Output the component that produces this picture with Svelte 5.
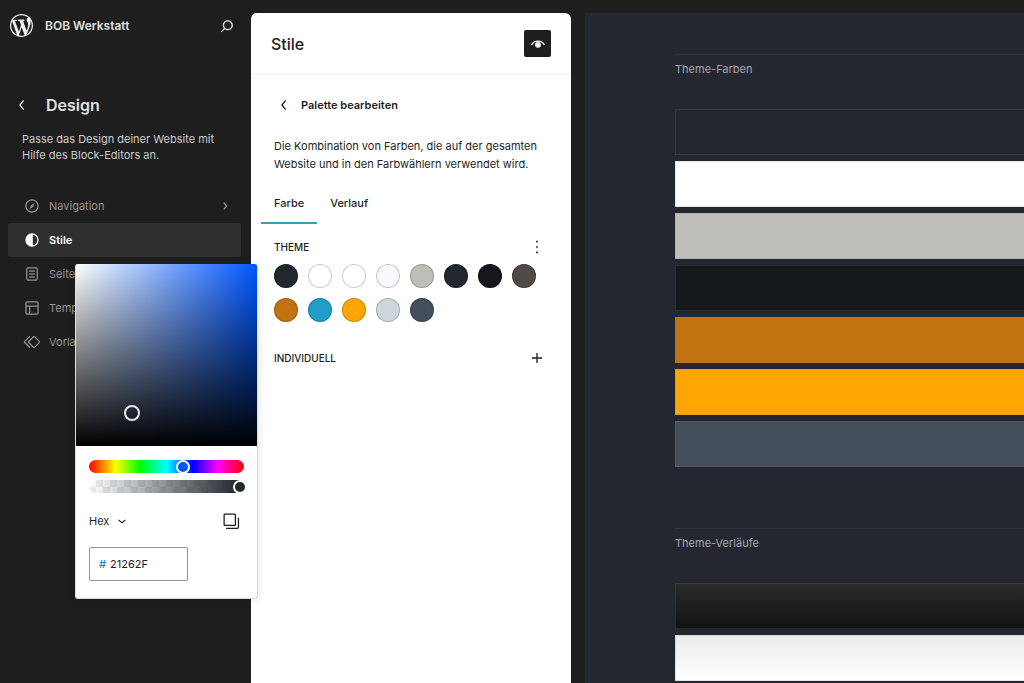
<script lang="ts">
    type NavItem = { id: string; label: string; icon: string; more?: boolean };

    const navItems: NavItem[] = [
        {
            id: "navigation",
            label: "Navigation",
            icon: "M12 4c-4.4 0-8 3.6-8 8s3.6 8 8 8 8-3.6 8-8-3.6-8-8-8zm0 14.5c-3.6 0-6.5-2.9-6.5-6.5S8.4 5.5 12 5.5s6.5 2.9 6.5 6.5-2.9 6.5-6.5 6.5zM9 16l4.5-3L15 8.4l-4.5 3L9 16z",
            more: true,
        },
        {
            id: "styles",
            label: "Stile",
            icon: "M12 4a8 8 0 1 0 0 16 8 8 0 0 0 0-16zm1 1.6a6.5 6.5 0 0 1 0 12.8z",
        },
        {
            id: "pages",
            label: "Seiten",
            icon: "M7 4h10a2 2 0 0 1 2 2v12a2 2 0 0 1-2 2H7a2 2 0 0 1-2-2V6a2 2 0 0 1 2-2zm0 1.5a.5.5 0 0 0-.5.5v12c0 .3.2.5.5.5h10a.5.5 0 0 0 .5-.5V6a.5.5 0 0 0-.5-.5zM8.5 7.7h7v1.5h-7zM8.5 11.2h7v1.5h-7zM8.5 14.7h7v1.5h-7z",
        },
        {
            id: "templates",
            label: "Templates",
            icon: "M18 5.5H6a.5.5 0 0 0-.5.5v3h13V6a.5.5 0 0 0-.5-.5zm.5 5H10v8h8a.5.5 0 0 0 .5-.5v-7.5zm-10 0h-3V18a.5.5 0 0 0 .5.5h2.5v-8zM6 4h12a2 2 0 0 1 2 2v12a2 2 0 0 1-2 2H6a2 2 0 0 1-2-2V6a2 2 0 0 1 2-2z",
        },
        {
            id: "patterns",
            label: "Vorlagen",
            icon: "M21.3 10.8l-5.6-5.6c-.7-.7-1.8-.7-2.5 0l-5.6 5.6c-.7.7-.7 1.8 0 2.5l5.6 5.6c.3.3.8.5 1.2.5s.9-.2 1.2-.5l5.6-5.6c.8-.7.8-1.9.1-2.5zm-1 1.4l-5.6 5.6c-.1.1-.3.1-.4 0l-5.6-5.6c-.1-.1-.1-.3 0-.4l5.6-5.6s.1-.1.2-.1.1 0 .2.1l5.6 5.6c.1.1.1.3 0 .4zm-16.6-.4L10 5.5l-1-1-6.3 6.3c-.7.7-.7 1.8 0 2.5L9 19.5l1.1-1.1-6.3-6.3c-.2 0-.2-.2-.1-.3z",
        },
    ];

    const themeColors = [
        "#21262f", "#ffffff", "#ffffff", "#f7f9fc", "#bfbdb7", "#21262f", "#15171c",
        "#504947", "#c27210", "#219ec8", "#ffa602", "#ced6db", "#454f5b",
    ];

    const previewColors = ["#242630", "#ffffff", "#bfbdb8", "#14181c", "#c37311", "#ffa602", "#454f5a"];
    const previewGradients = [
        "linear-gradient(#2c2b2b, #121212)",
        "linear-gradient(#ebebeb, #ffffff)",
    ];

    let activeNav = $state("styles");
    let activeTab = $state("Farbe");
    let hex = $state("21262F");
    let hue = $state(222);
    let alpha = $state(100);
    let pointer = $state({ x: 31, y: 82 });

    const movePointer = (e: MouseEvent) => {
        const box = (e.currentTarget as HTMLElement).getBoundingClientRect();
        if (e.detail === 0) return;
        pointer = {
            x: ((e.clientX - box.left) / box.width) * 100,
            y: ((e.clientY - box.top) / box.height) * 100,
        };
    };
</script>

<div class="editor">
    <aside class="sidebar">
        <header class="site">
            <a href="#dashboard" class="logo" aria-label="WordPress">
                <svg viewBox="0 0 20 20" width="23" height="23" fill="currentColor">
                    <path d="M20 10c0-5.51-4.49-10-10-10C4.48 0 0 4.49 0 10c0 5.52 4.48 10 10 10 5.51 0 10-4.48 10-10zM7.78 15.37L4.37 6.22c.55-.02 1.17-.08 1.17-.08.5-.06.44-1.13-.06-1.11 0 0-1.45.11-2.37.11-.18 0-.37 0-.58-.01C4.12 2.69 6.87 1.11 10 1.11c2.33 0 4.45.87 6.05 2.34-.68-.11-1.65.39-1.65 1.58 0 .74.45 1.36.9 2.1.35.61.55 1.36.55 2.46 0 1.49-1.4 5-1.4 5l-3.03-8.37c.54-.02.82-.17.82-.17.5-.05.44-1.25-.06-1.22 0 0-1.44.12-2.38.12-.87 0-2.33-.12-2.33-.12-.5-.03-.56 1.2-.06 1.22l.92.08 1.26 3.41zM17.41 10c.24-.64.74-1.87.43-4.25.7 1.29 1.05 2.71 1.05 4.25 0 3.29-1.73 6.24-4.4 7.78.97-2.59 1.94-5.2 2.92-7.78zM6.1 18.09C3.12 16.65 1.11 13.53 1.11 10c0-1.3.23-2.48.72-3.59C3.25 10.3 4.67 14.2 6.1 18.09zm4.03-6.63l2.58 6.98c-.86.29-1.76.45-2.71.45-.79 0-1.57-.11-2.29-.33.81-2.38 1.62-4.74 2.42-7.1z" />
                </svg>
            </a>
            <span class="site-name">BOB Werkstatt</span>
            <button class="icon-button" aria-label="Suchen">
                <svg viewBox="0 0 24 24" width="20" height="20" fill="currentColor">
                    <path d="M13 5c-3.3 0-6 2.7-6 6 0 1.4.5 2.7 1.3 3.7l-3.8 3.8 1.1 1.1 3.8-3.8c1 .8 2.3 1.3 3.7 1.3 3.3 0 6-2.7 6-6S16.3 5 13 5zm0 10.5c-2.5 0-4.5-2-4.5-4.5s2-4.5 4.5-4.5 4.5 2 4.5 4.5-2 4.5-4.5 4.5z" />
                </svg>
            </button>
        </header>

        <div class="heading">
            <button class="icon-button" aria-label="Zurück">
                <svg viewBox="0 0 24 24" width="20" height="20">
                    <path class="line" d="M14 6.5 9.5 12l4.5 5.5" />
                </svg>
            </button>
            <h1>Design</h1>
        </div>
        <p class="intro">Passe das Design deiner Website mit Hilfe des Block-Editors an.</p>

        <nav>
            {#each navItems as item}
                <button class="nav-item" class:active={item.id === activeNav} onclick={() => (activeNav = item.id)}>
                    <svg viewBox="0 0 24 24" width="20" height="20" fill="currentColor" fill-rule="evenodd">
                        <path d={item.icon} />
                    </svg>
                    <span>{item.label}</span>
                    {#if item.more}
                        <svg viewBox="0 0 24 24" width="20" height="20">
                            <path class="line" d="m10.5 8 3.5 4-3.5 4" />
                        </svg>
                    {/if}
                </button>
            {/each}
        </nav>
    </aside>

    <section class="panel">
        <header class="panel-header">
            <h2>Stile</h2>
            <button class="preview-toggle" aria-label="Stilbuch">
                <svg viewBox="0 0 24 24" width="20" height="20">
                    <path class="line" d="M4.3 13C5.8 10.2 8.5 8.5 12 8.5s6.2 1.7 7.7 4.5" />
                    <circle cx="12" cy="13" r="3.5" fill="currentColor" />
                </svg>
            </button>
        </header>

        <div class="panel-body">
            <div class="panel-title">
                <button class="icon-button" aria-label="Zurück">
                    <svg viewBox="0 0 24 24" width="20" height="20">
                        <path class="line" d="M14 6.5 9.5 12l4.5 5.5" />
                    </svg>
                </button>
                <h3>Palette bearbeiten</h3>
            </div>
            <p class="description">Die Kombination von Farben, die auf der gesamten Website und in den Farbwählern verwendet wird.</p>

            <div class="tabs" role="tablist">
                {#each ["Farbe", "Verlauf"] as tab}
                    <button role="tab" aria-selected={tab === activeTab} class:selected={tab === activeTab} onclick={() => (activeTab = tab)}>{tab}</button>
                {/each}
            </div>

            <div class="group-header">
                <h4>Theme</h4>
                <button class="icon-button" aria-label="Farboptionen">
                    <svg viewBox="0 0 24 24" width="20" height="20" fill="currentColor">
                        <path d="M11 4.5h2v2h-2zM11 11h2v2h-2zM11 17.5h2v2h-2z" />
                    </svg>
                </button>
            </div>
            <div class="swatches">
                {#each themeColors as color}
                    <button class="swatch" style="background-color: {color}" aria-label="Farbe {color}"></button>
                {/each}
            </div>

            <div class="group-header">
                <h4>Individuell</h4>
                <button class="icon-button" aria-label="Farbe hinzufügen">
                    <svg viewBox="0 0 24 24" width="20" height="20">
                        <path class="line" d="M12 6v12M6 12h12" />
                    </svg>
                </button>
            </div>
        </div>
    </section>

    <main class="preview">
        <section>
            <h2>Theme-Farben</h2>
            <div class="bars">
                {#each previewColors as color}
                    <div class="bar" style="background: {color}"></div>
                {/each}
            </div>
        </section>
        <section>
            <h2>Theme-Verläufe</h2>
            <div class="bars">
                {#each previewGradients as gradient}
                    <div class="bar" style="background: {gradient}"></div>
                {/each}
            </div>
        </section>
    </main>

    <div class="picker" role="dialog" aria-label="Farbwähler">
        <button class="saturation" aria-label="Sättigung und Helligkeit" onclick={movePointer}>
            <span class="pointer" style="left: {pointer.x}%; top: {pointer.y}%"></span>
        </button>
        <div class="controls">
            <input class="slider hue" type="range" min="0" max="360" bind:value={hue} aria-label="Farbton" />
            <input class="slider alpha" type="range" min="0" max="100" bind:value={alpha} aria-label="Deckkraft" />
            <div class="format">
                <div class="select">
                    <select aria-label="Farbformat">
                        <option>Hex</option>
                        <option>RGB</option>
                        <option>HSL</option>
                    </select>
                    <svg viewBox="0 0 24 24" width="14" height="14">
                        <path class="line chevron" d="m6 10 6 5 6-5" />
                    </svg>
                </div>
                <button class="icon-button" aria-label="Kopieren">
                    <svg viewBox="0 0 24 24" width="20" height="20" fill="currentColor" fill-rule="evenodd">
                        <path d="M20.2 8v11c0 .7-.6 1.2-1.2 1.2H6v1.5h13c1.5 0 2.7-1.2 2.7-2.8V8zM18 16.4V4.6c0-.9-.7-1.6-1.6-1.6H4.6C3.7 3 3 3.7 3 4.6v11.8c0 .9.7 1.6 1.6 1.6h11.8c.9 0 1.6-.7 1.6-1.6zm-13.5 0V4.6c0-.1.1-.1.1-.1h11.8c.1 0 .1.1.1.1v11.8c0 .1-.1.1-.1.1H4.6l-.1-.1z" />
                    </svg>
                </button>
            </div>
            <label class="hex">
                <span>#</span>
                <input type="text" bind:value={hex} maxlength="9" aria-label="Hex-Farbe" />
            </label>
        </div>
    </div>
</div>

<style>
    :global(body) {
        margin: 0;
        background: #1e1e1e;
    }
    .editor {
        position: relative;
        display: grid;
        grid-template-columns: 251px 320px minmax(0, 1fr);
        min-height: 100vh;
        background: #1e1e1e;
        color: #1e1e1e;
        font-family: Inter, "Liberation Sans", sans-serif;
        font-size: 11px;
        line-height: 16px;
    }
    .editor * {
        box-sizing: border-box;
    }
    h1, h2, h3, h4, p {
        margin: 0;
    }
    button, input, select {
        margin: 0;
        padding: 0;
        border: none;
        background: none;
        color: inherit;
        font: inherit;
    }
    button {
        cursor: pointer;
    }
    svg {
        display: block;
        flex: none;
    }
    .line {
        fill: none;
        stroke: currentColor;
        stroke-width: 1.6;
    }
    .chevron {
        stroke-width: 2;
    }
    .icon-button {
        display: flex;
        flex: none;
    }

    /* dark navigation column */
    .sidebar {
        color: #e0e0e0;
    }
    .site {
        display: flex;
        align-items: center;
        height: 51px;
        padding: 0 14px 0 10px;
    }
    .logo {
        color: #f0f0f0;
    }
    .site-name {
        flex: 1;
        margin-left: 12px;
        font-size: 12px;
        font-weight: 600;
    }
    .heading {
        display: flex;
        align-items: center;
        gap: 14px;
        margin-top: 41px;
        padding: 0 12px;
    }
    h1 {
        font-size: 16px;
        font-weight: 600;
        line-height: 26px;
    }
    .intro {
        padding: 13px 30px 0 22px;
        color: #cccccc;
    }
    nav {
        display: flex;
        flex-direction: column;
        margin-top: 26px;
        padding: 0 10px 0 8px;
    }
    .nav-item {
        display: flex;
        align-items: center;
        gap: 7px;
        height: 34px;
        padding: 0 6px 0 14px;
        border-radius: 2px;
        color: #949494;
        text-align: left;
    }
    .nav-item span {
        flex: 1;
    }
    .nav-item.active {
        background: #2f2f2f;
        color: #ffffff;
        font-weight: 600;
    }

    /* styles panel */
    .panel {
        margin-top: 13px;
        border-radius: 6px 6px 0 0;
        background: #ffffff;
    }
    .panel-header {
        display: flex;
        align-items: center;
        justify-content: space-between;
        height: 62px;
        padding: 0 20px;
        border-bottom: 1px solid #f2f2f2;
    }
    .panel-header h2 {
        font-size: 16px;
        font-weight: 500;
        line-height: 24px;
    }
    .preview-toggle {
        display: grid;
        place-items: center;
        width: 27px;
        height: 27px;
        border-radius: 2px;
        background: #1e1e1e;
        color: #ffffff;
    }
    .panel-body {
        padding: 20px 24px 24px 23px;
    }
    .panel-title {
        display: flex;
        align-items: center;
        gap: 7px;
    }
    h3 {
        font-size: 11px;
        font-weight: 600;
    }
    .description {
        margin-top: 22px;
        line-height: 18px;
    }
    .tabs {
        display: flex;
        margin: 11px 0 13px -13px;
    }
    .tabs button {
        height: 40px;
        padding: 0 13px;
        border-bottom: 2px solid transparent;
        font-weight: 500;
    }
    .tabs button.selected {
        border-bottom-color: #3f9bb5;
    }
    .group-header {
        display: flex;
        align-items: center;
        justify-content: space-between;
    }
    h4 {
        font-size: 10px;
        font-weight: 500;
        text-transform: uppercase;
    }
    .swatches {
        display: grid;
        grid-template-columns: repeat(8, 24px);
        gap: 10px;
        margin: 7px 0 26px;
    }
    .swatch {
        width: 24px;
        height: 24px;
        border-radius: 50%;
        box-shadow: inset 0 0 0 1px rgba(0, 0, 0, 0.2);
    }

    /* style book */
    .preview {
        margin: 13px 0 0 14px;
        padding: 41px 0 0 90px;
        background: #242630;
    }
    .preview section {
        border-top: 1px solid #2c303a;
    }
    .preview section + section {
        margin-top: 61px;
    }
    .preview h2 {
        padding: 6px 0 32px;
        color: #a3a6ad;
        font-size: 11px;
        font-weight: 400;
    }
    .bars {
        display: grid;
        gap: 6px;
    }
    .bar {
        height: 46px;
        box-shadow: inset 1px 1px 0 rgba(120, 125, 135, 0.2), inset 0 -1px 0 rgba(120, 125, 135, 0.2);
    }

    /* floating colour picker */
    .picker {
        position: absolute;
        top: 264px;
        left: 75px;
        width: 183px;
        overflow: hidden;
        border: 1px solid #dddddd;
        border-top: none;
        border-radius: 3px;
        background: #ffffff;
        box-shadow: 0 1px 10px rgba(0, 0, 0, 0.12);
    }
    .saturation {
        position: relative;
        display: block;
        width: 100%;
        height: 182px;
        background: linear-gradient(to top, #000000, transparent), linear-gradient(to right, #ffffff, #0056ff);
    }
    .pointer {
        position: absolute;
        width: 16px;
        height: 16px;
        border: 2px solid #e4e6ea;
        border-radius: 50%;
        transform: translate(-50%, -50%);
    }
    .controls {
        display: flex;
        flex-direction: column;
        padding: 14px 13px 17px;
    }
    .slider {
        appearance: none;
        width: 100%;
        height: 13px;
        border-radius: 7px;
    }
    .hue {
        background: linear-gradient(to right, #ff0000, #ffff00 17%, #00ff00 33%, #00ffff 50%, #0000ff 67%, #ff00ff 83%, #ff0000);
    }
    .alpha {
        width: calc(100% + 3px);
        margin-top: 7px;
        background: linear-gradient(to right, transparent, #21262f 95%, #ffffff 95%), repeating-conic-gradient(#eeeeee 0 25%, #ffffff 0 50%) 0 0 / 14px 14px;
    }
    .slider::-webkit-slider-thumb {
        appearance: none;
        width: 14px;
        height: 14px;
        border: 2px solid #ffffff;
        border-radius: 50%;
        background: #0056ff;
    }
    .slider.alpha::-webkit-slider-thumb {
        background: #21262f;
    }
    .format {
        display: flex;
        align-items: center;
        justify-content: space-between;
        margin-top: 18px;
        padding-right: 3px;
    }
    .select {
        display: flex;
        align-items: center;
    }
    .select select {
        appearance: none;
        width: 40px;
        margin-right: -14px;
        padding-right: 14px;
    }
    .select svg {
        pointer-events: none;
    }
    .hex {
        display: flex;
        align-items: center;
        gap: 4px;
        width: 99px;
        height: 34px;
        margin-top: 16px;
        padding: 0 9px;
        border: 1px solid #949494;
        border-radius: 2px;
    }
    .hex span {
        color: #1c8fb8;
        font-weight: 600;
    }
    .hex input {
        width: 100%;
        min-width: 0;
    }
</style>
